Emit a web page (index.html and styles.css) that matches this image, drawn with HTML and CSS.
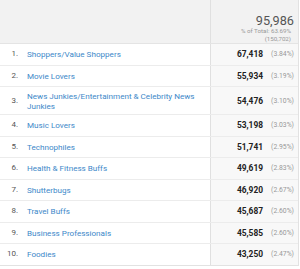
FILE: index.html
```html
<!DOCTYPE html>
<html>
<head>
<meta charset="utf-8">
<link rel="stylesheet" href="styles.css">
</head>
<body>
<div class="table">
  <div class="row head">
    <div class="cell left"></div>
    <div class="cell right total">
      <div class="big">95,986</div>
      <div class="sub">% of Total: 63.69%</div>
      <div class="sub">(150,702)</div>
    </div>
  </div>
  <div class="row"><div class="cell left"><span class="rank">1.</span><span class="label">Shoppers/Value Shoppers</span></div><div class="cell right"><span class="val">67,418</span><span class="pct">(3.84%)</span></div></div>
  <div class="row"><div class="cell left"><span class="rank">2.</span><span class="label">Movie Lovers</span></div><div class="cell right"><span class="val">55,934</span><span class="pct">(3.19%)</span></div></div>
  <div class="row"><div class="cell left"><span class="rank">3.</span><span class="label">News Junkies/Entertainment &amp; Celebrity News Junkies</span></div><div class="cell right"><span class="val">54,476</span><span class="pct">(3.10%)</span></div></div>
  <div class="row"><div class="cell left"><span class="rank">4.</span><span class="label">Music Lovers</span></div><div class="cell right"><span class="val">53,198</span><span class="pct">(3.03%)</span></div></div>
  <div class="row"><div class="cell left"><span class="rank">5.</span><span class="label">Technophiles</span></div><div class="cell right"><span class="val">51,741</span><span class="pct">(2.95%)</span></div></div>
  <div class="row"><div class="cell left"><span class="rank">6.</span><span class="label">Health &amp; Fitness Buffs</span></div><div class="cell right"><span class="val">49,619</span><span class="pct">(2.83%)</span></div></div>
  <div class="row"><div class="cell left"><span class="rank">7.</span><span class="label">Shutterbugs</span></div><div class="cell right"><span class="val">46,920</span><span class="pct">(2.67%)</span></div></div>
  <div class="row"><div class="cell left"><span class="rank">8.</span><span class="label">Travel Buffs</span></div><div class="cell right"><span class="val">45,687</span><span class="pct">(2.60%)</span></div></div>
  <div class="row"><div class="cell left"><span class="rank">9.</span><span class="label">Business Professionals</span></div><div class="cell right"><span class="val">45,585</span><span class="pct">(2.60%)</span></div></div>
  <div class="row"><div class="cell left"><span class="rank">10.</span><span class="label">Foodies</span></div><div class="cell right"><span class="val">43,250</span><span class="pct">(2.47%)</span></div></div>
</div>
</body>
</html>
```
FILE: styles.css
```css
html, body {
  margin: 0;
  padding: 0;
  background: #fff;
}
body {
  font-family: Roboto, "Liberation Sans", sans-serif;
}
.table {
  width: 298px;
  border-right: 1px solid #e2e2e2;
}
.row {
  display: grid;
  grid-template-columns: 210px 1fr;
  border-bottom: 1px solid #ececec;
  min-height: 20.5px;
}
.row:last-child {
  border-bottom-color: #e2e2e2;
}
.row.head {
  height: 43px;
  background: #f2f2f2;
  border-bottom: 1px solid #e4e4e4;
}
.cell {
  display: flex;
  align-items: center;
}
.cell.right {
  border-left: 1px solid #e0e0e0;
  background: #f8f8f8;
  justify-content: flex-end;
  padding-right: 4px;
}
.head .cell.right {
  background: #f2f2f2;
}
.cell.left {
  padding: 3.5px 0;
}
.rank {
  width: 18px;
  flex: none;
  text-align: right;
  font-size: 8px;
  line-height: 10px;
  color: #555;
}
.label {
  margin-left: 9px;
  font-size: 8.1px;
  line-height: 10px;
  color: #3d88c9;
  padding-right: 8px;
}
.val {
  font-size: 8.4px;
  font-weight: 700;
  color: #222;
}
.pct {
  width: 24px;
  margin-left: 7px;
  text-align: right;
  font-size: 6.8px;
  color: #999;
}
.total {
  flex-direction: column;
  align-items: flex-end;
  justify-content: flex-start;
  padding-top: 7px;
  padding-right: 5px;
}
.big {
  font-size: 12.7px;
  line-height: 12px;
  color: #555;
}
.sub {
  font-size: 6.2px;
  line-height: 8px;
  color: #999;
  margin-right: 3px;
}
```
